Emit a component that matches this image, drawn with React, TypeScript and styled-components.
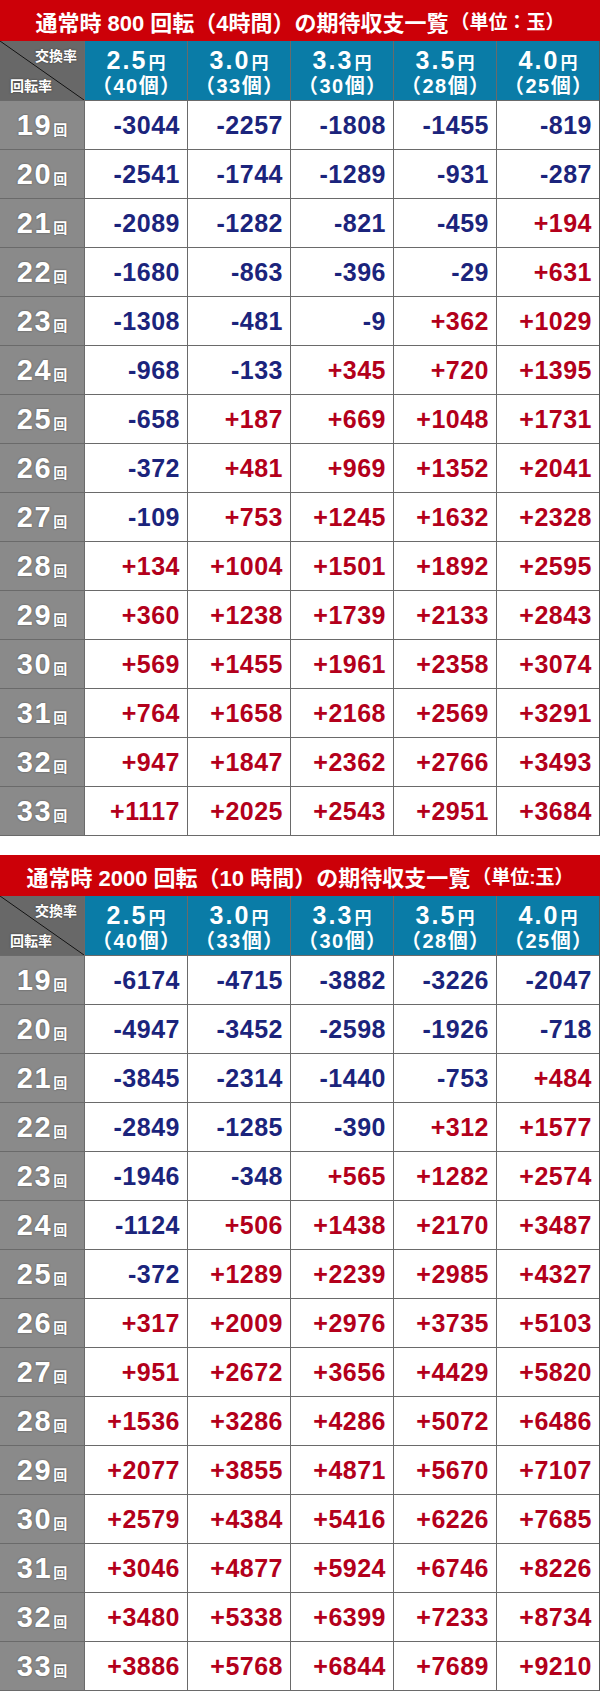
import React from "react";
import styled, { createGlobalStyle } from "styled-components";

const GlobalStyle = createGlobalStyle`
  html, body { margin: 0; padding: 0; background: #ffffff; }
  body { font-family: "Liberation Sans", "Noto Sans CJK JP", sans-serif; }
`;

const Page = styled.div`
  width: 600px;
  display: flex;
  flex-direction: column;
  gap: 19px;
  padding-bottom: 10px;
`;

const Section = styled.section`
  display: flex;
  flex-direction: column;
`;

const TitleBar = styled.div`
  height: 41px;
  background: #cc0008;
  color: #ffffff;
  display: flex;
  align-items: center;
  justify-content: center;
  font-weight: 700;
  font-size: 22px;
  font-family: "Liberation Sans", "Noto Sans CJK JP", sans-serif;
  white-space: nowrap;
`;

const TitleUnit = styled.span`
  font-size: 19px;
  margin-left: 2px;
`;

const Grid = styled.div`
  display: grid;
  grid-template-columns: 84px repeat(5, 102px);
  grid-auto-rows: 48px;
  grid-template-rows: 59px;
  gap: 1px;
  background: #6a6a6a;
  border-right: 1px solid #555555;
  border-bottom: 1px solid #6a6a6a;
  width: 599px;
`;

const Corner = styled.div`
  background: #686868 linear-gradient(
      to top right,
      transparent calc(50% - 0.8px),
      #111111 50%,
      transparent calc(50% + 0.8px)
    );
  color: #ffffff;
  font-weight: 700;
  font-size: 14px;
  display: flex;
  flex-direction: column;
  justify-content: space-between;
  padding: 4px 7px 5px 10px;
  text-shadow: 0 0 2px rgba(0, 0, 0, 0.5);
`;

const CornerTop = styled.span`
  align-self: flex-end;
`;

const CornerBottom = styled.span`
  align-self: flex-start;
`;

const RateHead = styled.div`
  background: #0a7ca7;
  color: #ffffff;
  font-weight: 700;
  display: flex;
  flex-direction: column;
  align-items: center;
  justify-content: center;
  line-height: 1;
  padding-top: 3px;
`;

const RateValue = styled.div`
  font-size: 25px;
  letter-spacing: 2px;
  display: flex;
  align-items: baseline;
`;

const Yen = styled.span`
  font-size: 17px;
  margin-left: 1px;
  letter-spacing: 0;
`;

const Count = styled.div`
  font-size: 20px;
  letter-spacing: 1.5px;
  padding-left: 1.5px;
  margin-top: 3px;
`;

const RowLabel = styled.div`
  background: #8a8a8a;
  color: #ffffff;
  font-weight: 700;
  display: flex;
  align-items: baseline;
  justify-content: center;
  padding-top: 10px;
  text-shadow: 0 0 2px rgba(0, 0, 0, 0.45);
`;

const LabelNum = styled.span`
  font-size: 29px;
  line-height: 1;
  letter-spacing: 1.5px;
`;

const LabelUnit = styled.span`
  font-size: 14px;
  margin-left: 1px;
`;

const Cell = styled.div<{ $positive: boolean }>`
  background: #ffffff;
  color: ${(p) => (p.$positive ? "#b3001b" : "#1b247c")};
  font-weight: 700;
  font-size: 25px;
  letter-spacing: 0.5px;
  display: flex;
  align-items: center;
  justify-content: flex-end;
  padding-right: 7px;
`;

type TableData = {
  title: string;
  unit: string;
  rows: number[][];
};

const rates = [
  { rate: "2.5", count: "40" },
  { rate: "3.0", count: "33" },
  { rate: "3.3", count: "30" },
  { rate: "3.5", count: "28" },
  { rate: "4.0", count: "25" },
];

const table1: TableData = {
  title: "通常時 800 回転（4時間）の期待収支一覧",
  unit: "（単位：玉）",
  rows: [
    [-3044, -2257, -1808, -1455, -819],
    [-2541, -1744, -1289, -931, -287],
    [-2089, -1282, -821, -459, 194],
    [-1680, -863, -396, -29, 631],
    [-1308, -481, -9, 362, 1029],
    [-968, -133, 345, 720, 1395],
    [-658, 187, 669, 1048, 1731],
    [-372, 481, 969, 1352, 2041],
    [-109, 753, 1245, 1632, 2328],
    [134, 1004, 1501, 1892, 2595],
    [360, 1238, 1739, 2133, 2843],
    [569, 1455, 1961, 2358, 3074],
    [764, 1658, 2168, 2569, 3291],
    [947, 1847, 2362, 2766, 3493],
    [1117, 2025, 2543, 2951, 3684],
  ],
};

const table2: TableData = {
  title: "通常時 2000 回転（10 時間）の期待収支一覧",
  unit: "（単位:玉）",
  rows: [
    [-6174, -4715, -3882, -3226, -2047],
    [-4947, -3452, -2598, -1926, -718],
    [-3845, -2314, -1440, -753, 484],
    [-2849, -1285, -390, 312, 1577],
    [-1946, -348, 565, 1282, 2574],
    [-1124, 506, 1438, 2170, 3487],
    [-372, 1289, 2239, 2985, 4327],
    [317, 2009, 2976, 3735, 5103],
    [951, 2672, 3656, 4429, 5820],
    [1536, 3286, 4286, 5072, 6486],
    [2077, 3855, 4871, 5670, 7107],
    [2579, 4384, 5416, 6226, 7685],
    [3046, 4877, 5924, 6746, 8226],
    [3480, 5338, 6399, 7233, 8734],
    [3886, 5768, 6844, 7689, 9210],
  ],
};

const fmt = (n: number) => (n > 0 ? `+${n}` : `${n}`);

const ExpectTable: React.FC<{ data: TableData }> = ({ data }) => (
  <Section>
    <TitleBar>
      {data.title}
      <TitleUnit>{data.unit}</TitleUnit>
    </TitleBar>
    <Grid>
      <Corner>
        <CornerTop>交換率</CornerTop>
        <CornerBottom>回転率</CornerBottom>
      </Corner>
      {rates.map((r) => (
        <RateHead key={r.rate}>
          <RateValue>
            {r.rate}
            <Yen>円</Yen>
          </RateValue>
          <Count>（{r.count}個）</Count>
        </RateHead>
      ))}
      {data.rows.map((row, i) => (
        <React.Fragment key={i}>
          <RowLabel>
            <LabelNum>{19 + i}</LabelNum>
            <LabelUnit>回</LabelUnit>
          </RowLabel>
          {row.map((v, j) => (
            <Cell key={j} $positive={v > 0}>
              {fmt(v)}
            </Cell>
          ))}
        </React.Fragment>
      ))}
    </Grid>
  </Section>
);

export default function App() {
  return (
    <>
      <GlobalStyle />
      <Page>
        <ExpectTable data={table1} />
        <ExpectTable data={table2} />
      </Page>
    </>
  );
}
